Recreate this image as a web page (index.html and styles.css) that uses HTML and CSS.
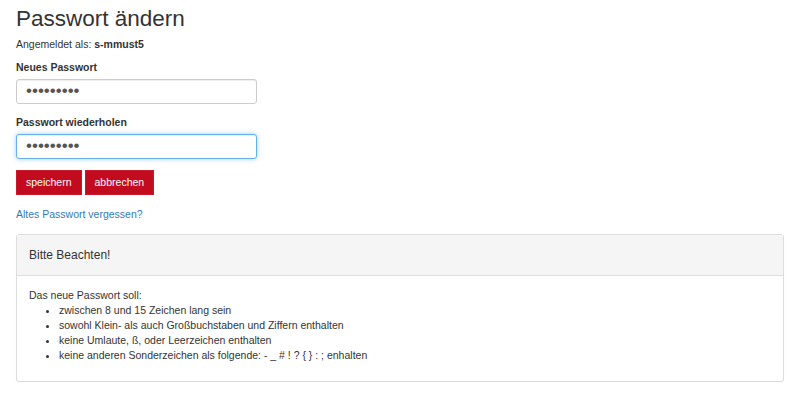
FILE: index.html
```html
<!DOCTYPE html>
<html>

<head>
    <title>Passwort ändern</title>
    <link rel="stylesheet" href="styles.css">
</head>

<body>
    <div class="page">
        <h2>Passwort ändern</h2>
        <p class="user-line">Angemeldet als: <b>s-mmust5</b></p>

        <form class="pw-form">
            <div class="form-group">
                <label for="pw-new">Neues Passwort</label>
                <input type="password" id="pw-new" class="form-control" value="abcdefghi">
            </div>
            <div class="form-group">
                <label for="pw-repeat">Passwort wiederholen</label>
                <input type="password" id="pw-repeat" class="form-control is-focused" value="abcdefghi">
            </div>
            <div class="button-row">
                <button type="button" class="btn">speichern</button>
                <button type="button" class="btn">abbrechen</button>
            </div>
        </form>

        <a class="forgot-link" href="#">Altes Passwort vergessen?</a>

        <div class="panel">
            <div class="panel-heading">Bitte Beachten!</div>
            <div class="panel-body">
                Das neue Passwort soll:
                <ul>
                    <li>zwischen 8 und 15 Zeichen lang sein</li>
                    <li>sowohl Klein- als auch Großbuchstaben und Ziffern enthalten</li>
                    <li>keine Umlaute, ß, oder Leerzeichen enthalten</li>
                    <li>keine anderen Sonderzeichen als folgende: - _ # ! ? { } : ; enhalten</li>
                </ul>
            </div>
        </div>
    </div>
</body>

</html>
```

FILE: styles.css
```css
body {
    font-family: "Liberation Sans", Arial, sans-serif;
    font-size: 10.5px;
    line-height: 15px;
    color: #333;
    background-color: #fff;
    margin: 0;
    padding: 0;
}

.page {
    padding: 0 16px;
}

h2 {
    font-size: 22.5px;
    font-weight: normal;
    line-height: 1.1;
    margin: 7px 0 5px 0;
}

.user-line {
    margin: 0 0 8px 0;
}

.form-group {
    margin-bottom: 11px;
}

label {
    display: block;
    font-weight: bold;
    margin-bottom: 4px;
}

/* the bigger size only makes the password dots match */
.form-control {
    display: block;
    box-sizing: border-box;
    width: 241px;
    height: 25px;
    padding: 0 9px;
    font-family: "Liberation Sans", Arial, sans-serif;
    font-size: 17px;
    color: #555;
    background-color: #fff;
    border: 1px solid #ccc;
    border-radius: 3px;
    box-shadow: inset 0 1px 1px rgba(0, 0, 0, .075);
    margin: 0;
}

.form-control.is-focused {
    border-color: #66afe9;
    outline: 0;
    box-shadow: inset 0 1px 1px rgba(0, 0, 0, .075), 0 0 5px rgba(102, 175, 233, .6);
}

.button-row {
    display: flex;
    gap: 3px;
}

.btn {
    font-family: inherit;
    font-size: 10.5px;
    line-height: 15px;
    padding: 4px 9px;
    color: #fff;
    background-color: #c20b1f;
    border: 1px solid #c81a2c;
    border-radius: 0;
    margin: 0;
    cursor: pointer;
}

.forgot-link {
    display: block;
    margin-top: 12px;
    color: #337ab7;
    text-decoration: none;
}

.panel {
    margin-top: 12px;
    border: 1px solid #ddd;
    border-radius: 3px;
    background-color: #fff;
    box-shadow: 0 1px 1px rgba(0, 0, 0, .05);
}

.panel-heading {
    background-color: #f5f5f5;
    border-bottom: 1px solid #ddd;
    font-size: 12px;
    line-height: 14px;
    padding: 13px 12px;
}

.panel-body {
    padding: 12px 12px 11px 12px;
}

.panel-body ul {
    margin: 0 0 7px 0;
    padding-left: 30px;
}
```
